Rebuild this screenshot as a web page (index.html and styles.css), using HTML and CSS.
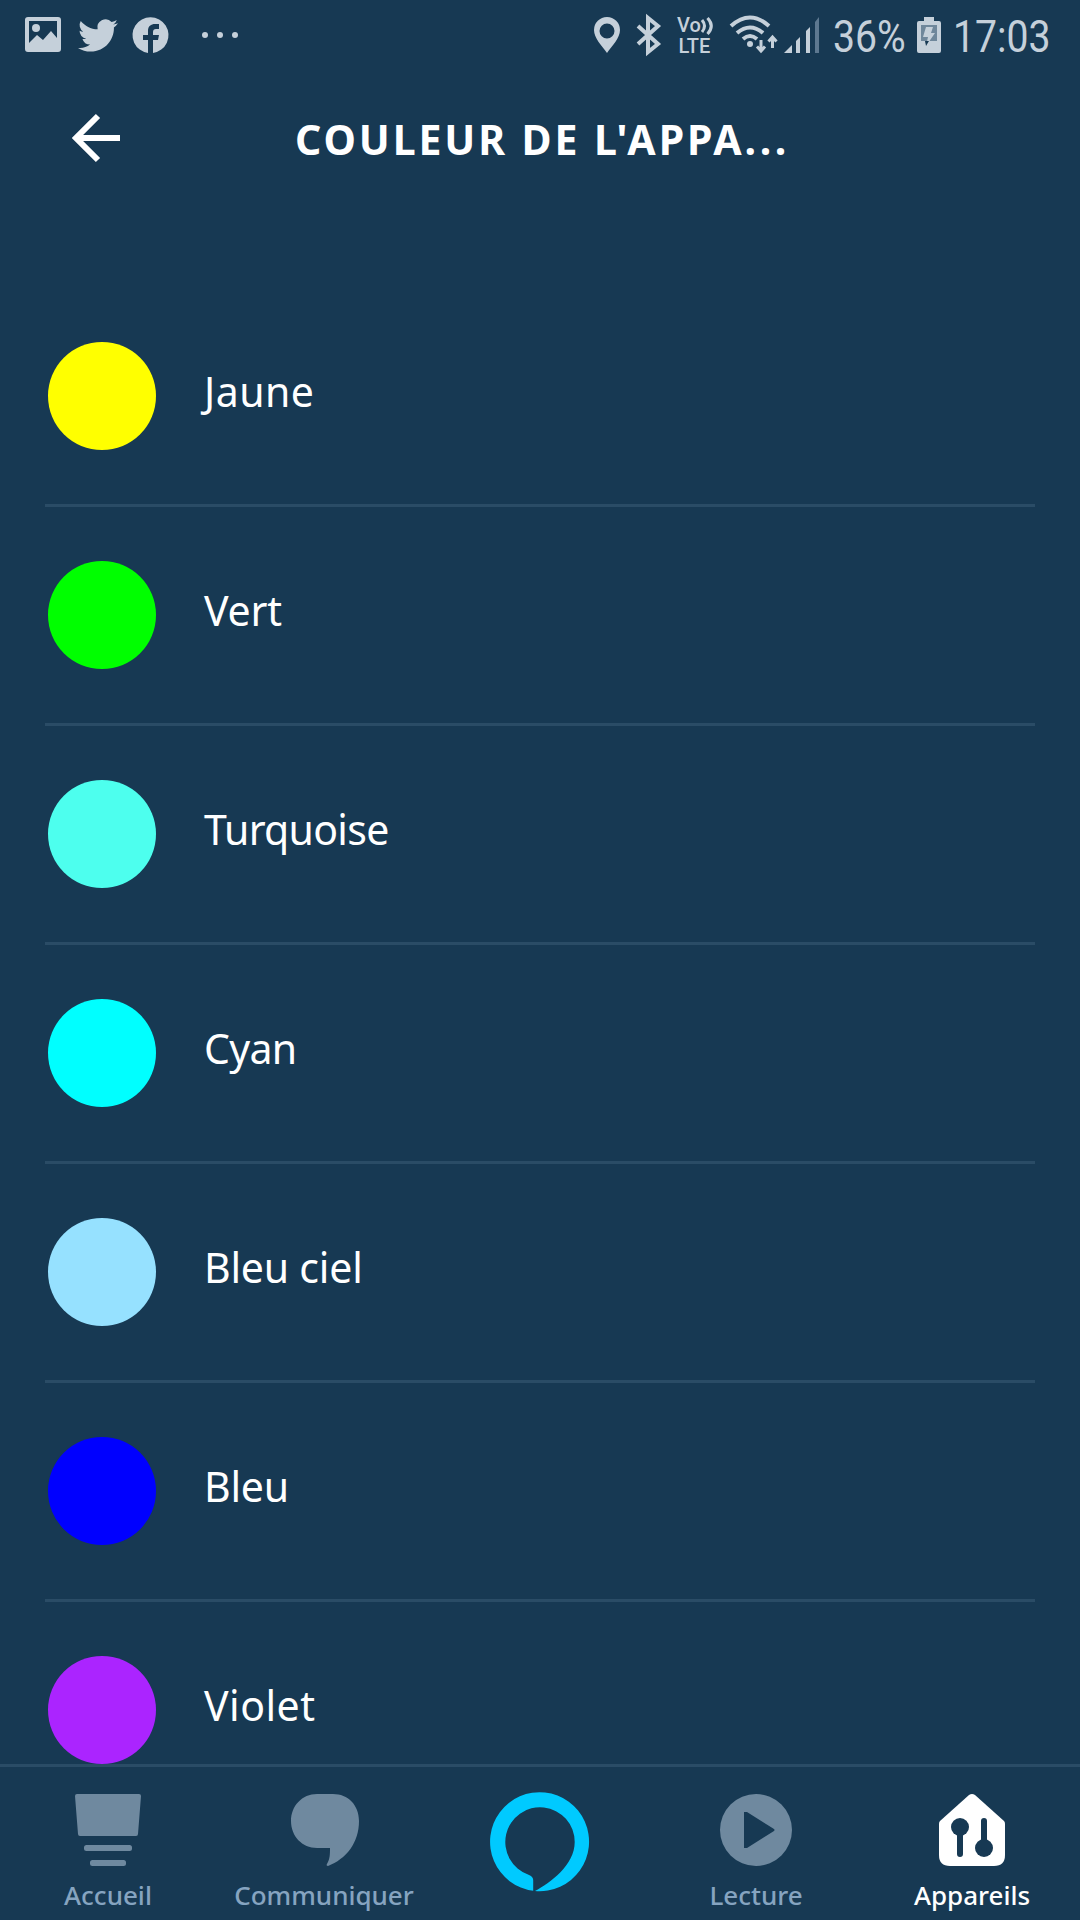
FILE: index.html
```html
<!DOCTYPE html>
<html lang="fr">
<head>
    <meta charset="UTF-8">
    <meta name="viewport" content="width=device-width, initial-scale=1.0">
    <title>Couleur de l'appareil</title>
    <link rel="stylesheet" href="styles.css">
</head>
<body>
    <!-- Barre d'état -->
    <div class="status-bar">
        <div class="status-left">
            <svg class="icon-picture" width="36" height="36" viewBox="0 0 36 36">
                <path fill-rule="evenodd" d="M3 0h30q3 0 3 3v29q0 3-3 3H3q-3 0-3-3V3q0-3 3-3zM4 4v22l8-8 6 5 8-9 6 7V4z"/>
                <circle cx="11" cy="11" r="4"/>
            </svg>
            <svg class="icon-twitter" width="40" height="33" viewBox="0 2 24 20" preserveAspectRatio="none">
                <path d="M23.95 4.57a10 10 0 0 1-2.82.77 4.96 4.96 0 0 0 2.16-2.72c-.95.55-2 .95-3.13 1.18a4.92 4.92 0 0 0-8.38 4.48C7.69 8.1 4.07 6.13 1.64 3.16a4.92 4.92 0 0 0 1.52 6.57 4.9 4.9 0 0 1-2.23-.61v.06a4.92 4.92 0 0 0 3.95 4.83 5 5 0 0 1-2.21.08 4.94 4.94 0 0 0 4.6 3.42A9.87 9.87 0 0 1 0 19.54a14 14 0 0 0 7.55 2.21c9.05 0 14-7.5 14-13.98 0-.21 0-.42-.02-.63a9.94 9.94 0 0 0 2.46-2.55z"/>
            </svg>
            <svg class="icon-facebook" width="36" height="36" viewBox="0 0 36 36">
                <path d="M15 36V23h-5v-5h5v-4c0-5 3-7 7-7h4v5h-3c-2 0-3 1-3 3v3h6l-1 5h-5v13a18 18 0 1 0-5 0z"/>
            </svg>
            <svg class="icon-more" width="36" height="6" viewBox="0 0 36 6">
                <circle cx="3" cy="3" r="3"/><circle cx="18" cy="3" r="3"/><circle cx="33" cy="3" r="3"/>
            </svg>
        </div>
        <div class="status-right">
            <svg class="icon-pin" width="26" height="36" viewBox="0 0 26 36">
                <path fill-rule="evenodd" d="M13 0a13 13 0 0 1 13 13c0 8-8 16-13 23C8 29 0 21 0 13A13 13 0 0 1 13 0zm0 6.500a7.500 7.500 0 1 0 0 15 7.500 7.500 0 0 0 0-15z"/>
            </svg>
            <svg class="icon-bluetooth" width="25" height="38" viewBox="0 0 25 38">
                <path class="line" d="M2 10l20 18-10 8V2l10 8L2 28"/>
            </svg>
            <svg class="icon-volte" width="37" height="38" viewBox="0 0 37 38">
                <text x="0" y="16">Vo</text>
                <text x="1.500" y="37">LTE</text>
                <path class="line" d="M25 4q5 6 0 12M30.500 2q7.500 8 0 16"/>
            </svg>
            <svg class="icon-wifi" width="49" height="38" viewBox="0 0 49 38">
                <path class="line" d="M2 10q19-17 38 0M8 17q13-11 26 0M14 23q7-6 14 0"/>
                <circle cx="21" cy="28" r="3"/>
                <path class="line thin" d="M32 24v10M28 30.500l4 4.500 4-4.500M43.500 32V22M39.500 25.500l4-4.500 4 4.500"/>
            </svg>
            <svg class="icon-signal" width="36" height="36" viewBox="0 0 36 36">
                <path d="M0 36l8-8v8zM12 24l4-4v16h-4zM22 14l4-4v26h-4z"/>
                <path class="dim" d="M31 5l4-5v36h-4z"/>
            </svg>
            <span class="battery-level">36%</span>
            <svg class="icon-battery" width="24" height="36" viewBox="0 0 24 36">
                <path d="M7 0h10v4h5q2 0 2 2v28q0 2-2 2H2q-2 0-2-2V6q0-2 2-2h5z"/>
                <path class="battery-empty" d="M4 8h16v16H4z"/>
                <path d="M9 10h7l-2 6h4L9 29l2-9H6z"/>
                <path class="battery-cut" d="M8 24h4l-3 5z"/>
            </svg>
            <span class="clock">17:03</span>
        </div>
    </div>

    <!-- En-tête -->
    <header class="header">
        <svg class="back" width="48" height="49" viewBox="0 0 48 49">
            <path d="M26 2L4 24 26 46M4 24h44"/>
        </svg>
        <h1>COULEUR DE L'APPA<span class="dots">...</span></h1>
    </header>

    <!-- Liste des couleurs -->
    <ul class="colors">
        <li><span class="swatch yellow"></span><span class="name wide">Jaune</span></li>
        <li><span class="swatch green"></span><span class="name">Vert</span></li>
        <li><span class="swatch turquoise"></span><span class="name tight">Turquoise</span></li>
        <li><span class="swatch cyan"></span><span class="name tight">Cyan</span></li>
        <li><span class="swatch sky"></span><span class="name">Bleu ciel</span></li>
        <li><span class="swatch blue"></span><span class="name">Bleu</span></li>
        <li><span class="swatch violet"></span><span class="name wide">Violet</span></li>
    </ul>

    <!-- Navigation du bas -->
    <nav class="tabs">
        <a class="tab">
            <svg width="72" height="72" viewBox="0 0 72 72">
                <path d="M5 0h62q2 0 2 2l-3 38q0 2-2 2H8q-2 0-2-2L3 2q0-2 2-2z"/>
                <rect x="12" y="51" width="48" height="6" rx="2.500"/>
                <rect x="18" y="66" width="36" height="6" rx="2.500"/>
            </svg>
            <span>Accueil</span>
        </a>
        <a class="tab">
            <svg width="72" height="72" viewBox="0 0 72 72">
                <path d="M29 0h16c15 0 26 11 26 27 0 22-13 38-31 45-1 0-2-1-1-2 3-5 3-10 3-16H29C14 54 3 42 3 27S14 0 29 0z"/>
            </svg>
            <span>Communiquer</span>
        </a>
        <a class="tab alexa">
            <svg width="100" height="100" viewBox="0 0 100 100">
                <path d="M43.200 98.800A49.500 49.500 0 1 1 45 99C60 91 84.700 73 84.700 50A34.700 34.700 0 1 0 38.500 82.700Q43.200 84.500 43.200 88z"/>
            </svg>
        </a>
        <a class="tab">
            <svg width="72" height="72" viewBox="0 0 72 72">
                <path fill-rule="evenodd" d="M36 0a36 36 0 1 1 0 72 36 36 0 0 1 0-72zM24 18v36h3l27-17q1-1 0-2L27 18z"/>
            </svg>
            <span>Lecture</span>
        </a>
        <a class="tab active">
            <svg width="72" height="72" viewBox="0 0 72 72">
                <path d="M33 1q3-2 6 0l29 26q1 1 1 3v31q0 11-11 11H14Q3 72 3 61V30q0-2 1-3z"/>
                <g class="sliders">
                    <circle cx="24" cy="33" r="9"/><circle cx="48" cy="54" r="9"/>
                    <path d="M24 33v27M48 27v27"/>
                </g>
            </svg>
            <span>Appareils</span>
        </a>
    </nav>
</body>
</html>
```

FILE: styles.css
```css
* {
    box-sizing: border-box;
}

body {
    display: flex;
    flex-direction: column;
    width: 1080px;
    height: 1920px;
    margin: 0;
    overflow: hidden;
    background-color: #173953;
    color: #fff;
    font-family: 'Noto Sans', 'Open Sans', sans-serif;
}

svg {
    display: block;
    flex: none;
    overflow: visible;
}

/* Barre d'état */
.status-bar {
    display: flex;
    justify-content: space-between;
    height: 72px;
    padding: 0 29px 0 25px;
    color: #c5d0da;
    fill: #c5d0da;
}

.status-left,
.status-right {
    display: flex;
    align-items: center;
    height: 70px;
}

.icon-twitter {
    margin-left: 17px;
}

.icon-facebook {
    margin-left: 15px;
}

.icon-more {
    margin-left: 33px;
}

.icon-bluetooth {
    margin-left: 16px;
}

.icon-volte {
    margin-left: 16px;
    font: 500 20px Roboto, sans-serif;
}

.icon-wifi {
    margin-left: 15px;
}

.icon-signal {
    margin-left: 6px;
}

.icon-battery {
    margin-left: 12px;
}

.line {
    fill: none;
    stroke: #c5d0da;
    stroke-width: 4;
}

.icon-volte .line,
.line.thin {
    stroke-width: 3;
}

.dim {
    fill: #5d7890;
}

.battery-empty {
    fill: #6f879b;
}

.battery-cut {
    fill: #173953;
}

.battery-level,
.clock {
    padding-top: 3px;
    font-family: Roboto, sans-serif;
    font-size: 45px;
    line-height: 70px;
    white-space: nowrap;
    transform: scaleX(0.87);
    transform-origin: left;
}

.battery-level {
    width: 72px;
    margin-left: 13px;
}

.clock {
    width: 98px;
    margin-left: 12px;
}

/* En-tête */
.header {
    display: flex;
    align-items: center;
    height: 132px;
    padding-left: 72px;
}

.back {
    fill: none;
    stroke: #fff;
    stroke-width: 6;
}

h1 {
    margin: 2px 0 0 175px;
    font-size: 41px;
    font-weight: 700;
    letter-spacing: 2.9px;
    white-space: nowrap;
}

.dots {
    letter-spacing: 3.6px;
}

/* Liste des couleurs */
.colors {
    flex: 1;
    min-height: 0;
    margin: 0;
    padding: 84px 45px 0;
    overflow: hidden;
    list-style: none;
}

.colors li {
    display: flex;
    align-items: center;
    height: 219px;
    padding-left: 3px;
    border-bottom: 3px solid #2a4c66;
}

.swatch {
    width: 108px;
    height: 108px;
    border-radius: 50%;
}

.yellow { background-color: #ffff00; }
.green { background-color: #00ff00; }
.turquoise { background-color: #4dffee; }
.cyan { background-color: #00ffff; }
.sky { background-color: #96e1ff; }
.blue { background-color: #0000ff; }
.violet { background-color: #ab24ff; }

.name {
    margin-left: 48px;
    padding-bottom: 10px;
    font-size: 41px;
    font-weight: 450;
    line-height: 56px;
    letter-spacing: -0.2px;
}

.wide {
    letter-spacing: 0.5px;
}

.tight {
    letter-spacing: -0.7px;
}

/* Navigation du bas */
.tabs {
    display: grid;
    grid-template-columns: repeat(5, 1fr);
    flex: none;
    height: 156px;
    border-top: 3px solid #2a4c66;
}

.tab {
    display: flex;
    flex-direction: column;
    align-items: center;
    padding-top: 27px;
    color: #86a4c0;
    fill: #6f899f;
    font-size: 26px;
    font-weight: 500;
    line-height: 36px;
}

.tab span {
    margin-top: 11px;
}

.alexa {
    padding-top: 25px;
    fill: #00caff;
}

.active {
    color: #fff;
    fill: #fff;
}

.sliders {
    fill: #173953;
    stroke-linecap: round;
}

.sliders path {
    stroke: #173953;
    stroke-width: 6;
}
```
